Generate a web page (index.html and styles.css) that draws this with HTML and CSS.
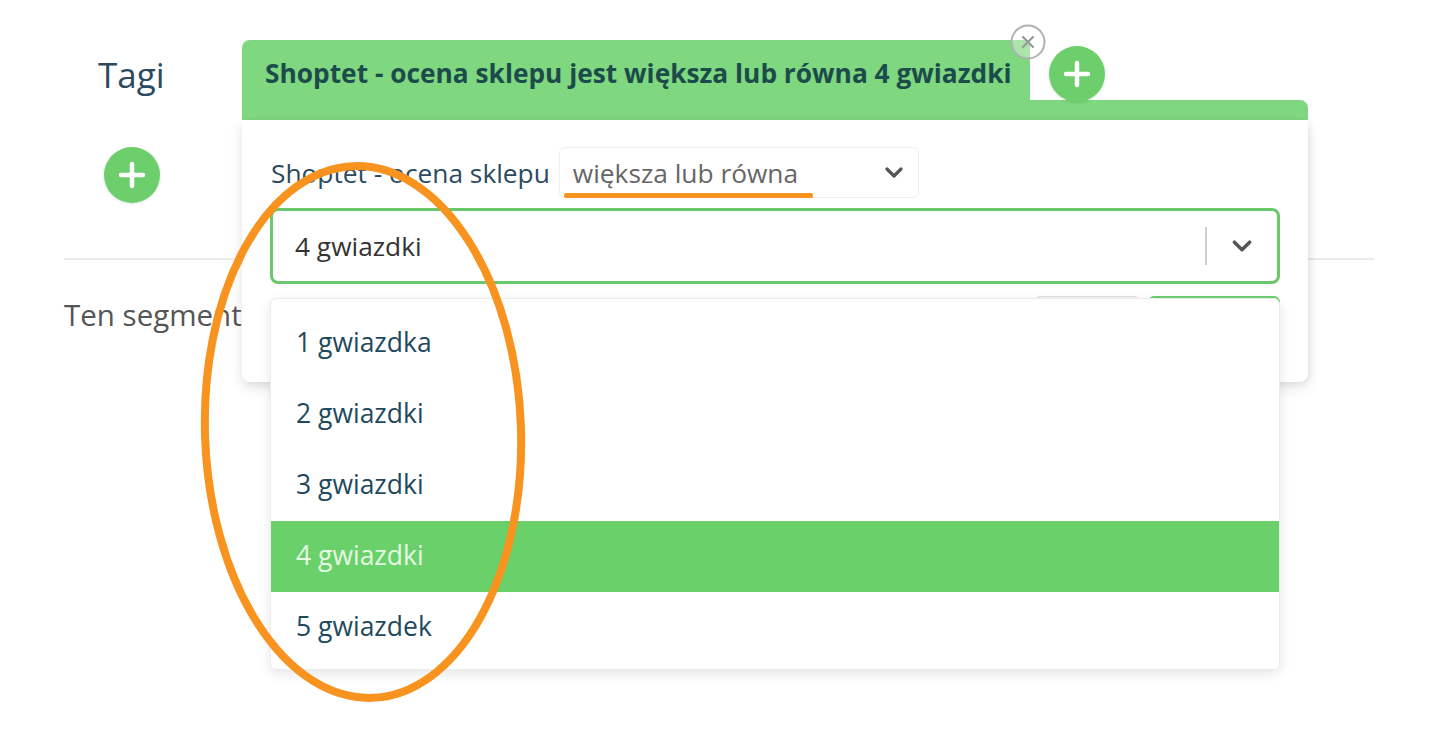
FILE: index.html
```html
<!DOCTYPE html>
<html lang="pl">
<head>
<meta charset="utf-8">
<title>Segment</title>
<link rel="stylesheet" href="styles.css">
</head>
<body>
<div class="page">
  <div class="left">
    <h2 class="tags-title">Tagi</h2>
    <button class="plus-btn plus-left" aria-label="Dodaj">
      <svg viewBox="0 0 56 56" width="56" height="56"><path d="M28 17v22M17 28h22" stroke="#fff" stroke-width="4.5" stroke-linecap="round"/></svg>
    </button>
    <div class="divider"></div>
    <p class="segment-text">Ten segment</p>
  </div>

  <div class="card">
    <div class="tab-row">
      <div class="tab">
        <span class="tab-title">Shoptet - ocena sklepu jest większa lub równa 4 gwiazdki</span>
        <span class="close-btn">
          <svg viewBox="0 0 36 36" width="36" height="36"><circle cx="18" cy="18" r="16.5" fill="rgba(255,255,255,0.35)" stroke="#b0b0b0" stroke-width="2"/><path d="M13 13l10 10M23 13l-10 10" stroke="#999" stroke-width="2.2" stroke-linecap="round"/></svg>
        </span>
      </div>
      <button class="plus-btn plus-tab" aria-label="Dodaj warunek">
        <svg viewBox="0 0 56 56" width="56" height="56"><path d="M28 17v22M17 28h22" stroke="#fff" stroke-width="4.5" stroke-linecap="round"/></svg>
      </button>
    </div>
    <div class="tab-bar"></div>
    <div class="card-body">
      <div class="cond-row">
        <span class="cond-label">Shoptet - ocena sklepu</span>
        <div class="op-select">
          <span class="op-value">większa lub równa</span>
          <svg class="chev" viewBox="0 0 20 12" width="20" height="12"><path d="M3 2l7 7 7-7" fill="none" stroke="#555" stroke-width="3.2" stroke-linecap="round" stroke-linejoin="round"/></svg>
        </div>
      </div>
      <div class="value-select">
        <span class="value-text">4 gwiazdki</span>
        <span class="sep"></span>
        <svg class="chev" viewBox="0 0 20 12" width="22" height="13"><path d="M3 2l7 7 7-7" fill="none" stroke="#555" stroke-width="3.2" stroke-linecap="round" stroke-linejoin="round"/></svg>
      </div>
      <div class="actions">
        <button class="btn btn-gray">Anuluj</button>
        <button class="btn btn-green">Zapisz</button>
      </div>
    </div>
  </div>

  <ul class="menu">
    <li class="opt">1 gwiazdka</li>
    <li class="opt">2 gwiazdki</li>
    <li class="opt">3 gwiazdki</li>
    <li class="opt selected">4 gwiazdki</li>
    <li class="opt">5 gwiazdek</li>
  </ul>

  <div class="underline-mark"></div>
  <svg class="ellipse-mark" viewBox="0 0 340 560" width="340" height="560"><ellipse cx="170" cy="280" rx="158" ry="266" fill="none" stroke="#f7931e" stroke-width="8" transform="rotate(-2 170 280)"/></svg>
</div>
</body>
</html>
```

FILE: styles.css
```css
* { box-sizing: border-box; }
html, body { margin: 0; padding: 0; background: #fff; }
body {
  font-family: "Open Sans", "Noto Sans", "Liberation Sans", sans-serif;
  width: 1440px;
  height: 736px;
  overflow: hidden;
}
.page { position: relative; width: 1440px; height: 736px; }

.left { padding: 52px 66px 0 64px; }
.tags-title {
  margin: 0 0 0 34px;
  font-weight: 400;
  font-size: 35px;
  line-height: 46px;
  color: #2c4a5f;
}
.plus-btn {
  width: 56px; height: 56px;
  border: none; padding: 0;
  border-radius: 50%;
  background: #6ccf6c;
  display: flex; align-items: center; justify-content: center;
  box-shadow: 0 1px 3px rgba(0,0,0,0.12);
}
.plus-left { margin: 49px 0 0 40px; }
.divider { height: 2px; background: #ececec; margin-top: 55px; }
.segment-text {
  margin: 34px 0 0 0;
  font-size: 29.5px;
  line-height: 42px;
  color: #555;
}

.card {
  position: absolute;
  left: 242px; top: 40px;
  width: 1066px;
}
.tab-row { display: flex; align-items: flex-start; height: 60px; }
.tab {
  position: relative;
  width: 788px; height: 60px;
  background: #7fd77f;
  border-radius: 8px 0 0 0;
  padding: 6px 0 0 23px;
  display: flex; align-items: center;
}
.tab-title {
  font-weight: 700;
  font-size: 26.3px;
  color: #1c4b4b;
  white-space: nowrap;
}
.close-btn {
  position: absolute;
  right: -16px; top: -16px;
  width: 36px; height: 36px;
  display: block;
}
.close-btn svg { display: block; }
.plus-tab { margin: 6px 0 0 19px; position: relative; z-index: 2; }
.tab-bar {
  height: 20px;
  background: #7fd77f;
  border-radius: 0 8px 0 0;
}
.card-body {
  background: #fff;
  border-radius: 0 0 8px 8px;
  box-shadow: 0 6px 14px rgba(0,0,0,0.10), 2px 2px 6px rgba(0,0,0,0.06);
  padding: 27px 28px 36px 28px;
  height: 262px;
}
.cond-row { display: flex; align-items: center; height: 51px; }
.cond-label {
  font-size: 26.3px;
  color: #2c4a5f;
  margin-left: 1px;
  white-space: nowrap;
}
.op-select {
  margin-left: 9px;
  width: 360px; height: 51px;
  border: 1px solid #f0f0f0;
  border-radius: 6px;
  display: flex; align-items: center;
  padding: 0 14px 0 13px;
}
.op-value { font-size: 26.3px; color: #666; flex: 1; white-space: nowrap; }
.chev { display: block; }

.value-select {
  margin-top: 10px;
  height: 76px;
  border: 3px solid #6cc86c;
  border-radius: 8px;
  display: flex; align-items: center;
  padding: 0 24px 0 22px;
}
.value-text { font-size: 26.3px; color: #333; flex: 1; }
.sep { width: 2px; height: 38px; background: #cfcfcf; margin-right: 24px; }

.actions {
  display: flex; justify-content: flex-end; gap: 8px;
  margin-top: 12px;
}
.btn {
  height: 50px;
  border-radius: 6px;
  font-family: inherit; font-size: 20px;
  border: 1px solid #ddd;
}
.btn-gray { width: 106px; background: #f5f5f5; color: #555; }
.btn-green { width: 132px; background: #6ccf6c; border-color: #6ccf6c; color: #fff; }

.menu {
  position: absolute;
  left: 270px; top: 298px;
  width: 1010px;
  margin: 0; padding: 9px 0 6px 0;
  list-style: none;
  background: #fff;
  border-radius: 6px;
  border: 1px solid #ececec;
  box-shadow: 0 4px 12px rgba(0,0,0,0.10);
}
.opt {
  height: 71px;
  display: flex; align-items: center;
  padding: 0 0 3px 25px;
  font-size: 26.5px;
  color: #1f4a5e;
}
.opt.selected { background: #6ad16a; color: #e4f8e4; }

.underline-mark {
  position: absolute;
  left: 564px; top: 193px;
  width: 249px; height: 5px;
  background: #f7931e;
  border-radius: 2px;
}
.ellipse-mark {
  position: absolute;
  left: 193px; top: 152px;
  pointer-events: none;
}
```
